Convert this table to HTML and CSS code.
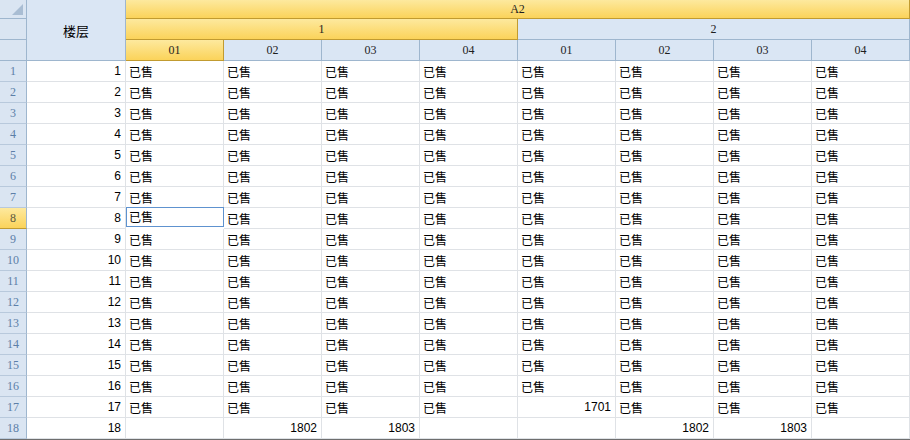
FILE: index.html
```html
<!DOCTYPE html>
<html lang="zh-CN">
<head>
<meta charset="utf-8">
<title>楼层</title>
<link rel="stylesheet" href="styles.css">
</head>
<body>
<div class="sheet">
  <div class="grid">
    <div class="corner c1"><span class="tri"></span></div>
    <div class="corner c2"></div>
    <div class="corner c3"></div>
    <div class="floorhead">楼层</div>
    <div class="hd yellow a2">A2</div>
    <div class="hd yellow g1">1</div>
    <div class="hd blue g2">2</div>
    <div class="hd yellow sub">01</div>
    <div class="hd blue sub">02</div>
    <div class="hd blue sub">03</div>
    <div class="hd blue sub">04</div>
    <div class="hd blue sub">01</div>
    <div class="hd blue sub">02</div>
    <div class="hd blue sub">03</div>
    <div class="hd blue sub">04</div>

    <div class="rh">1</div><div class="fl">1</div><div class="c">已售</div><div class="c">已售</div><div class="c">已售</div><div class="c">已售</div><div class="c">已售</div><div class="c">已售</div><div class="c">已售</div><div class="c">已售</div>
    <div class="rh">2</div><div class="fl">2</div><div class="c">已售</div><div class="c">已售</div><div class="c">已售</div><div class="c">已售</div><div class="c">已售</div><div class="c">已售</div><div class="c">已售</div><div class="c">已售</div>
    <div class="rh">3</div><div class="fl">3</div><div class="c">已售</div><div class="c">已售</div><div class="c">已售</div><div class="c">已售</div><div class="c">已售</div><div class="c">已售</div><div class="c">已售</div><div class="c">已售</div>
    <div class="rh">4</div><div class="fl">4</div><div class="c">已售</div><div class="c">已售</div><div class="c">已售</div><div class="c">已售</div><div class="c">已售</div><div class="c">已售</div><div class="c">已售</div><div class="c">已售</div>
    <div class="rh">5</div><div class="fl">5</div><div class="c">已售</div><div class="c">已售</div><div class="c">已售</div><div class="c">已售</div><div class="c">已售</div><div class="c">已售</div><div class="c">已售</div><div class="c">已售</div>
    <div class="rh">6</div><div class="fl">6</div><div class="c">已售</div><div class="c">已售</div><div class="c">已售</div><div class="c">已售</div><div class="c">已售</div><div class="c">已售</div><div class="c">已售</div><div class="c">已售</div>
    <div class="rh">7</div><div class="fl">7</div><div class="c">已售</div><div class="c">已售</div><div class="c">已售</div><div class="c">已售</div><div class="c">已售</div><div class="c">已售</div><div class="c">已售</div><div class="c">已售</div>
    <div class="rh sel">8</div><div class="fl">8</div><div class="c active">已售</div><div class="c">已售</div><div class="c">已售</div><div class="c">已售</div><div class="c">已售</div><div class="c">已售</div><div class="c">已售</div><div class="c">已售</div>
    <div class="rh">9</div><div class="fl">9</div><div class="c">已售</div><div class="c">已售</div><div class="c">已售</div><div class="c">已售</div><div class="c">已售</div><div class="c">已售</div><div class="c">已售</div><div class="c">已售</div>
    <div class="rh">10</div><div class="fl">10</div><div class="c">已售</div><div class="c">已售</div><div class="c">已售</div><div class="c">已售</div><div class="c">已售</div><div class="c">已售</div><div class="c">已售</div><div class="c">已售</div>
    <div class="rh">11</div><div class="fl">11</div><div class="c">已售</div><div class="c">已售</div><div class="c">已售</div><div class="c">已售</div><div class="c">已售</div><div class="c">已售</div><div class="c">已售</div><div class="c">已售</div>
    <div class="rh">12</div><div class="fl">12</div><div class="c">已售</div><div class="c">已售</div><div class="c">已售</div><div class="c">已售</div><div class="c">已售</div><div class="c">已售</div><div class="c">已售</div><div class="c">已售</div>
    <div class="rh">13</div><div class="fl">13</div><div class="c">已售</div><div class="c">已售</div><div class="c">已售</div><div class="c">已售</div><div class="c">已售</div><div class="c">已售</div><div class="c">已售</div><div class="c">已售</div>
    <div class="rh">14</div><div class="fl">14</div><div class="c">已售</div><div class="c">已售</div><div class="c">已售</div><div class="c">已售</div><div class="c">已售</div><div class="c">已售</div><div class="c">已售</div><div class="c">已售</div>
    <div class="rh">15</div><div class="fl">15</div><div class="c">已售</div><div class="c">已售</div><div class="c">已售</div><div class="c">已售</div><div class="c">已售</div><div class="c">已售</div><div class="c">已售</div><div class="c">已售</div>
    <div class="rh">16</div><div class="fl">16</div><div class="c">已售</div><div class="c">已售</div><div class="c">已售</div><div class="c">已售</div><div class="c">已售</div><div class="c">已售</div><div class="c">已售</div><div class="c">已售</div>
    <div class="rh">17</div><div class="fl">17</div><div class="c">已售</div><div class="c">已售</div><div class="c">已售</div><div class="c">已售</div><div class="c num">1701</div><div class="c">已售</div><div class="c">已售</div><div class="c">已售</div>
    <div class="rh">18</div><div class="fl">18</div><div class="c"></div><div class="c num">1802</div><div class="c num">1803</div><div class="c"></div><div class="c"></div><div class="c num">1802</div><div class="c num">1803</div><div class="c"></div>
  </div>
  <div class="bottomline"></div>
</div>
</body>
</html>
```
FILE: styles.css
```css
html, body {
  margin: 0;
  padding: 0;
  background: #ffffff;
  overflow: hidden;
}

.sheet {
  width: 910px;
  height: 440px;
  display: flex;
  flex-direction: column;
}

.grid {
  display: grid;
  grid-template-columns: 27px 99px repeat(8, 98px);
  grid-template-rows: 19px 21px 21px repeat(18, 21px);
  font-family: "Liberation Sans", "Noto Sans CJK SC", sans-serif;
  font-size: 12px;
  color: #000;
}

.grid > div {
  box-sizing: border-box;
  border-right: 1px solid #dfe2e6;
  border-bottom: 1px solid #dfe2e6;
  display: flex;
  align-items: center;
  overflow: hidden;
  white-space: nowrap;
}

.corner {
  background: #dae5f2;
  border-right-color: #9eb6ce !important;
  border-bottom-color: #9eb6ce !important;
  grid-column: 1;
}
.c1 { grid-row: 1; position: relative; }
.c2 { grid-row: 2; }
.c3 { grid-row: 3; }

.tri {
  position: absolute;
  right: 3px;
  bottom: 3px;
  width: 0;
  height: 0;
  border-left: 11px solid transparent;
  border-bottom: 11px solid #a9bdd3;
}

.floorhead {
  grid-column: 2;
  grid-row: 1 / 4;
  background: #dae6f4;
  border-right-color: #9eb6ce !important;
  border-bottom-color: #9eb6ce !important;
  justify-content: center;
  font-family: "Noto Sans CJK SC", sans-serif;
  font-size: 13px;
}

.hd {
  justify-content: center;
  font-size: 12px;
  font-family: "Liberation Serif", "Noto Sans CJK SC", serif;
  color: #1e1e1e;
}

.yellow {
  background: linear-gradient(#fde99e, #fbd35a);
  border-right-color: #c19b30 !important;
  border-bottom-color: #c19b30 !important;
}

.blue {
  background: #dae6f4;
  border-right-color: #9eb6ce !important;
  border-bottom-color: #9eb6ce !important;
}

.a2 { grid-column: 3 / 11; grid-row: 1; }
.g1 { grid-column: 3 / 7; grid-row: 2; }
.g2 { grid-column: 7 / 11; grid-row: 2; }
.sub { grid-row: 3; }

.rh {
  background: #dae5f2;
  border-right-color: #9eb6ce !important;
  border-bottom-color: #b8c9dc !important;
  justify-content: center;
  color: #5c7fa8;
  font-size: 12px;
  font-family: "Liberation Serif", serif;
}

.rh.sel {
  background: linear-gradient(#fde99e, #fbd35a);
  border-bottom-color: #c19b30 !important;
  color: #5a5a40;
}

.fl {
  justify-content: flex-end;
  padding-right: 4px;
  font-family: "Liberation Sans", sans-serif;
  font-size: 12px;
}

.c {
  padding-left: 3px;
  font-family: "Noto Sans CJK SC", sans-serif;
  font-size: 12px;
}

.c.num {
  justify-content: flex-end;
  padding-left: 0;
  padding-right: 4px;
  font-family: "Liberation Sans", sans-serif;
}

.c.active {
  outline: 1px solid #5e92cf;
  outline-offset: -1px;
  position: relative;
  top: -1px;
  height: 20px;
}

.bottomline {
  height: 1px;
  background: #6e6e6e;
  width: 910px;
}
```
